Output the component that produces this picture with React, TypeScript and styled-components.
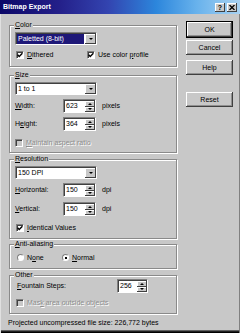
import styled, { createGlobalStyle } from "styled-components";

const GlobalStyle = createGlobalStyle`
  html, body {
    margin: 0;
    padding: 0;
    background: #c8c8c8;
  }
  body {
    font-family: "Liberation Sans", Arial, sans-serif;
    font-size: 7px;
    color: #000;
  }
  * {
    box-sizing: border-box;
  }
`;

const Window = styled.div`
  width: 240px;
  height: 333px;
  display: flex;
  flex-direction: column;
  background: #c8c8c8;
  overflow: hidden;
`;

const TitleBar = styled.div`
  height: 14px;
  flex-shrink: 0;
  display: flex;
  align-items: center;
  padding: 0 3px;
  background: linear-gradient(
    to right,
    #0c0868 0%,
    #24208a 25%,
    #3344b0 45%,
    #2c86dc 65%,
    #68b2ec 82%,
    #a8d2f2 100%
  );
  color: #fff;
  font-weight: bold;
`;

const TitleText = styled.span`
  flex: 1;
  line-height: 8px;
`;

const CaptionButtons = styled.div`
  display: flex;
  gap: 2px;
`;

const CaptionButton = styled.span`
  width: 10px;
  height: 9px;
  display: flex;
  align-items: center;
  justify-content: center;
  background: #c8c8c8;
  color: #000;
  font-size: 7px;
  font-weight: bold;
  line-height: 7px;
  box-shadow: inset -1px -1px 0 #404040, inset 1px 1px 0 #fff;
`;

const Body = styled.div`
  flex: 1;
  display: flex;
  padding: 7px 7px 0 9px;
  box-shadow: inset 1px 0 0 #e0e0e0, inset -1px 0 0 #808080,
    inset 0 -1px 0 #000, inset 0 -2px 0 #202020, inset 0 -3px 0 #606060;
`;

const LeftColumn = styled.div`
  width: 168px;
  display: flex;
  flex-direction: column;
`;

const RightColumn = styled.div`
  width: 47px;
  margin-left: 9px;
  display: flex;
  flex-direction: column;
`;

const Button = styled.div<{ $mt: number; $default?: boolean }>`
  margin-top: ${(p) => p.$mt}px;
  height: ${(p) => (p.$default ? 17 : 15)}px;
  display: flex;
  align-items: center;
  justify-content: center;
  background: #c8c8c8;
  line-height: 8px;
  border: ${(p) => (p.$default ? "1px solid #000" : "none")};
  box-shadow: inset -1px -1px 0 #404040, inset 1px 1px 0 #fff,
    inset -2px -2px 0 #909090;
`;

const Group = styled.fieldset<{ $mt: number; $pt: number; $pb: number }>`
  margin: ${(p) => p.$mt}px 0 0 0;
  padding: ${(p) => p.$pt}px 5px ${(p) => p.$pb}px 5px;
  border: 1px solid #8a8a8a;
  box-shadow: inset 1px 1px 0 #fff, 1px 1px 0 #fff;
  min-width: 0;
  display: flex;
  flex-direction: column;
`;

const Legend = styled.legend`
  padding: 0 1px;
  margin-left: -1px;
  height: 8px;
  line-height: 8px;
  background: #c8c8c8;
`;

const Key = styled.span`
  text-decoration: underline;
`;

const Select = styled.div<{ $w: number }>`
  width: ${(p) => p.$w}px;
  height: 13px;
  display: flex;
  background: #fff;
  border: 1px solid;
  border-color: #808080 #fff #fff #808080;
  box-shadow: inset 1px 1px 0 #404040;
  padding: 1px 0 0 1px;
`;

const SelectText = styled.span<{ $hl?: boolean }>`
  flex: 1;
  padding-left: 1px;
  line-height: 10px;
  background: ${(p) => (p.$hl ? "#1e1878" : "transparent")};
  color: ${(p) => (p.$hl ? "#fff" : "#000")};
  margin-right: 1px;
`;

const ArrowButton = styled.div`
  width: 11px;
  display: flex;
  align-items: center;
  justify-content: center;
  background: #c8c8c8;
  box-shadow: inset -1px -1px 0 #404040, inset 1px 1px 0 #fff;
`;

const DownTriangle = styled.span<{ $size: number }>`
  width: 0;
  height: 0;
  border-left: ${(p) => p.$size}px solid transparent;
  border-right: ${(p) => p.$size}px solid transparent;
  border-top: ${(p) => p.$size}px solid #000;
`;

const UpTriangle = styled.span<{ $size: number }>`
  width: 0;
  height: 0;
  border-left: ${(p) => p.$size}px solid transparent;
  border-right: ${(p) => p.$size}px solid transparent;
  border-bottom: ${(p) => p.$size}px solid #000;
`;

const FieldRow = styled.div<{ $mt: number; $pl?: number }>`
  display: flex;
  align-items: center;
  height: 14px;
  margin-top: ${(p) => p.$mt}px;
  padding-left: ${(p) => p.$pl ?? 0}px;
`;

const FieldLabel = styled.span<{ $w: number }>`
  width: ${(p) => p.$w}px;
  flex-shrink: 0;
  line-height: 8px;
`;

const Unit = styled.span`
  margin-left: 6px;
  line-height: 8px;
`;

const SpinBox = styled.div<{ $w: number }>`
  width: ${(p) => p.$w}px;
  height: 14px;
  display: flex;
  background: #fff;
  border: 1px solid;
  border-color: #808080 #fff #fff #808080;
  box-shadow: inset 1px 1px 0 #404040;
  padding: 1px 0 0 1px;
`;

const SpinValue = styled.span`
  flex: 1;
  padding-left: 1px;
  line-height: 10px;
`;

const SpinButtons = styled.div`
  width: 10px;
  display: flex;
  flex-direction: column;
`;

const SpinButton = styled.div`
  flex: 1;
  display: flex;
  align-items: center;
  justify-content: center;
  background: #c8c8c8;
  box-shadow: inset -1px -1px 0 #404040, inset 1px 1px 0 #fff;
`;

const CheckRow = styled.div<{ $mt: number; $pl: number }>`
  display: flex;
  align-items: center;
  height: 9px;
  margin-top: ${(p) => p.$mt}px;
  padding-left: ${(p) => p.$pl}px;
`;

const CheckItem = styled.div<{ $w?: number; $disabled?: boolean }>`
  display: flex;
  align-items: center;
  gap: 3px;
  width: ${(p) => (p.$w ? `${p.$w}px` : "auto")};
  line-height: 8px;
  color: ${(p) => (p.$disabled ? "#8c8c8c" : "#000")};
  text-shadow: ${(p) => (p.$disabled ? "1px 1px 0 #fff" : "none")};
`;

const CheckBox = styled.span<{ $disabled?: boolean }>`
  width: 8px;
  height: 8px;
  flex-shrink: 0;
  display: flex;
  align-items: center;
  justify-content: center;
  background: ${(p) => (p.$disabled ? "#c8c8c8" : "#fff")};
  border: 1px solid;
  border-color: #808080 #fff #fff #808080;
  box-shadow: inset 1px 1px 0 #404040;
`;

const Radio = styled.span`
  width: 7px;
  height: 7px;
  flex-shrink: 0;
  display: flex;
  align-items: center;
  justify-content: center;
  border-radius: 50%;
  background: #fff;
  border: 1px solid;
  border-color: #808080 #fff #fff #808080;
`;

const RadioDot = styled.span`
  width: 2px;
  height: 2px;
  background: #000;
`;

const Status = styled.div`
  margin: 5px 0 0 -1px;
  line-height: 8px;
`;

const Check = () => (
  <svg width="6" height="6" viewBox="0 0 6 6">
    <path d="M0.6 2.8 L2.2 4.4 L5.4 1.2" fill="none" stroke="#000" strokeWidth="1.4" />
  </svg>
);

const CloseGlyph = () => (
  <svg width="6" height="5" viewBox="0 0 6 5">
    <path d="M0.5 0 L5.5 5 M5.5 0 L0.5 5" stroke="#000" strokeWidth="1.3" />
  </svg>
);

const Spin = ({ value, width }: { value: string; width: number }) => (
  <SpinBox $w={width}>
    <SpinValue>{value}</SpinValue>
    <SpinButtons>
      <SpinButton>
        <UpTriangle $size={2} />
      </SpinButton>
      <SpinButton>
        <DownTriangle $size={2} />
      </SpinButton>
    </SpinButtons>
  </SpinBox>
);

const Dropdown = ({ value, hl }: { value: string; hl?: boolean }) => (
  <Select $w={82}>
    <SelectText $hl={hl}>{value}</SelectText>
    <ArrowButton>
      <DownTriangle $size={2.5} />
    </ArrowButton>
  </Select>
);

export default function App() {
  return (
    <>
      <GlobalStyle />
      <Window>
        <TitleBar>
          <TitleText>Bitmap Export</TitleText>
          <CaptionButtons>
            <CaptionButton>?</CaptionButton>
            <CaptionButton>
              <CloseGlyph />
            </CaptionButton>
          </CaptionButtons>
        </TitleBar>
        <Body>
          <LeftColumn>
            <Group $mt={0} $pt={3} $pb={7}>
              <Legend>
                <Key>C</Key>olor
              </Legend>
              <Dropdown value="Paletted (8-bit)" hl />
              <CheckRow $mt={5} $pl={1}>
                <CheckItem $w={71}>
                  <CheckBox>
                    <Check />
                  </CheckBox>
                  <span>
                    <Key>D</Key>ithered
                  </span>
                </CheckItem>
                <CheckItem>
                  <CheckBox>
                    <Check />
                  </CheckBox>
                  <span>
                    Use color <Key>p</Key>rofile
                  </span>
                </CheckItem>
              </CheckRow>
            </Group>

            <Group $mt={4} $pt={3} $pb={5}>
              <Legend>
                <Key>S</Key>ize
              </Legend>
              <Dropdown value="1 to 1" />
              <FieldRow $mt={4}>
                <FieldLabel $w={48}>
                  <Key>W</Key>idth:
                </FieldLabel>
                <Spin value="623" width={33} />
                <Unit>pixels</Unit>
              </FieldRow>
              <FieldRow $mt={4}>
                <FieldLabel $w={48}>
                  H<Key>e</Key>ight:
                </FieldLabel>
                <Spin value="364" width={33} />
                <Unit>pixels</Unit>
              </FieldRow>
              <CheckRow $mt={7} $pl={0}>
                <CheckItem $disabled>
                  <CheckBox $disabled />
                  <span>
                    <Key>M</Key>aintain aspect ratio
                  </span>
                </CheckItem>
              </CheckRow>
            </Group>

            <Group $mt={2} $pt={3} $pb={6}>
              <Legend>
                <Key>R</Key>esolution
              </Legend>
              <Dropdown value="150 DPI" />
              <FieldRow $mt={4}>
                <FieldLabel $w={48}>
                  <Key>H</Key>orizontal:
                </FieldLabel>
                <Spin value="150" width={33} />
                <Unit>dpi</Unit>
              </FieldRow>
              <FieldRow $mt={5}>
                <FieldLabel $w={48}>
                  <Key>V</Key>ertical:
                </FieldLabel>
                <Spin value="150" width={33} />
                <Unit>dpi</Unit>
              </FieldRow>
              <CheckRow $mt={7} $pl={1}>
                <CheckItem>
                  <CheckBox>
                    <Check />
                  </CheckBox>
                  <span>
                    <Key>I</Key>dentical Values
                  </span>
                </CheckItem>
              </CheckRow>
            </Group>

            <Group $mt={1} $pt={5} $pb={6}>
              <Legend>
                <Key>A</Key>nti-aliasing
              </Legend>
              <CheckRow $mt={0} $pl={2}>
                <CheckItem $w={45}>
                  <Radio />
                  <span>
                    N<Key>o</Key>ne
                  </span>
                </CheckItem>
                <CheckItem>
                  <Radio>
                    <RadioDot />
                  </Radio>
                  <span>
                    <Key>N</Key>ormal
                  </span>
                </CheckItem>
              </CheckRow>
            </Group>

            <Group $mt={2} $pt={0} $pb={6}>
              <Legend>Other</Legend>
              <FieldRow $mt={0} $pl={2}>
                <FieldLabel $w={100}>
                  <Key>F</Key>ountain Steps:
                </FieldLabel>
                <Spin value="256" width={31} />
              </FieldRow>
              <CheckRow $mt={5} $pl={1}>
                <CheckItem $disabled>
                  <CheckBox $disabled />
                  <span>
                    Mas<Key>k</Key> area outside objects
                  </span>
                </CheckItem>
              </CheckRow>
            </Group>

            <Status>Projected uncompressed file size: 226,772 bytes</Status>
          </LeftColumn>

          <RightColumn>
            <Button $mt={0} $default>
              OK
            </Button>
            <Button $mt={2}>Cancel</Button>
            <Button $mt={5}>Help</Button>
            <Button $mt={17}>Reset</Button>
          </RightColumn>
        </Body>
      </Window>
    </>
  );
}
